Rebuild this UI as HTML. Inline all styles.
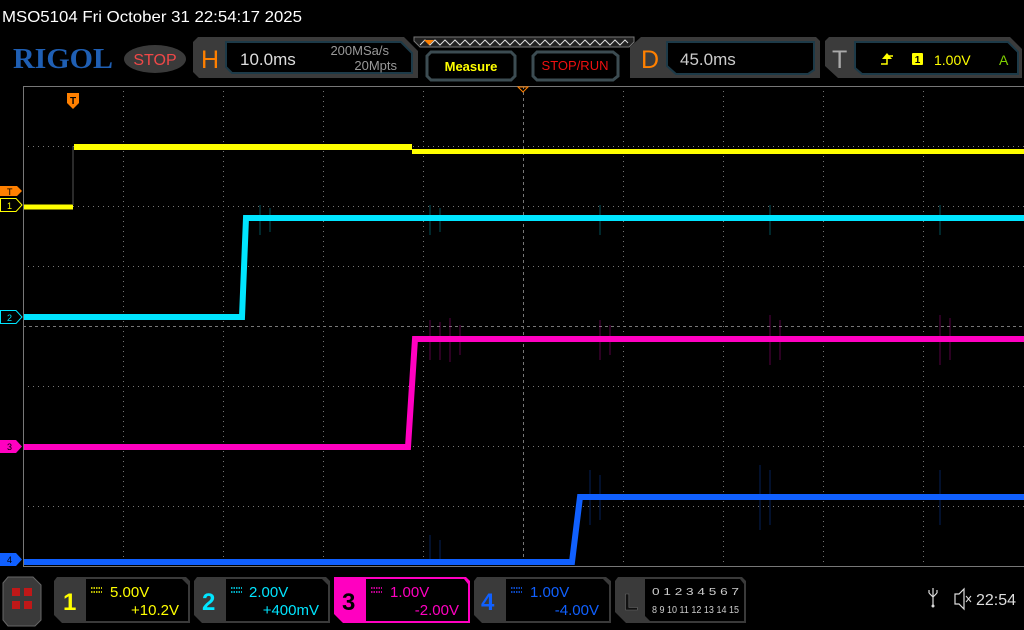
<!DOCTYPE html>
<html><head><meta charset="utf-8"><style>
body{margin:0;width:1024px;height:630px;background:#000;overflow:hidden;font-family:"Liberation Sans",sans-serif}
</style></head><body>
<svg width="1024" height="630" style="position:absolute;left:0;top:0" font-family="Liberation Sans, sans-serif">
<text x="2" y="22" fill="#fff" font-size="16" textLength="300" lengthAdjust="spacingAndGlyphs">MSO5104  Fri October 31 22:54:17 2025</text>
<text x="13" y="68" fill="#1f5fb4" font-size="29" font-family="Liberation Serif, serif" font-weight="bold" textLength="100" lengthAdjust="spacingAndGlyphs">RIGOL</text>
<ellipse cx="155" cy="59" rx="31" ry="14" fill="#3a3a3a"/>
<text x="155" y="65" fill="#f04848" font-size="16" text-anchor="middle">STOP</text>
<path d="M193 42 L198 37 L404 37 L418 51 L418 78 L199 78 L193 72Z" fill="#3b3b3b"/>
<path d="M226 42 L401 42 L412 53 L412 73 L232 73 L226 67Z" fill="#000" stroke="#1d3a48" stroke-width="2"/>
<text x="201" y="68" fill="#ff8000" font-size="25">H</text>
<text x="240" y="65" fill="#ddd" font-size="17">10.0ms</text>
<text x="389" y="55" fill="#999" font-size="13" text-anchor="end">200MSa/s</text>
<text x="397" y="70" fill="#999" font-size="13" text-anchor="end">20Mpts</text>
<path d="M414 37 L634 37 L634 42 L629 47 L420 47 L414 41Z" fill="#222" stroke="#777"/>
<polyline points="420,45 425,40 430,45 435,40 440,45 445,40 450,45 455,40 460,45 465,40 470,45 475,40 480,45 485,40 490,45 495,40 500,45 505,40 510,45 515,40 520,45 525,40 530,45 535,40 540,45 545,40 550,45 555,40 560,45 565,40 570,45 575,40 580,45 585,40 590,45 595,40 600,45 605,40 610,45 615,40 620,45 625,40 628,43" fill="none" stroke="#ddd" stroke-width="1"/>
<path d="M424 40 L434 40 L429 45Z" fill="#ff8000"/>
<path d="M427 56 L431 52 L511 52 L515 56 L515 76 L511 80 L431 80 L427 76Z" fill="#000" stroke="#3c4c52" stroke-width="3"/>
<text x="471" y="71" fill="#ffff00" font-size="13" font-weight="bold" text-anchor="middle">Measure</text>
<path d="M533 56 L537 52 L613 52 L618 56 L618 76 L613 80 L537 80 L533 76Z" fill="#000" stroke="#3c4c52" stroke-width="3"/>
<text x="575" y="70" fill="#f01010" font-size="13" text-anchor="middle">STOP/RUN</text>
<path d="M630 47 L641 37 L816 37 L820 41 L820 78 L630 78Z" fill="#3b3b3b"/>
<path d="M667 42 L814 42 L814 70 L808 74 L676 74 L667 66Z" fill="#000" stroke="#1d3a48" stroke-width="2"/>
<text x="641" y="68" fill="#ff8000" font-size="25">D</text>
<text x="680" y="65" fill="#ccc" font-size="17">45.0ms</text>
<path d="M825 41 L829 37 L1010 37 L1022 49 L1022 78 L838 78 L825 66Z" fill="#3b3b3b"/>
<path d="M855 42 L1008 42 L1018 52 L1018 74 L862 74 L855 68Z" fill="#000" stroke="#1d3a48" stroke-width="2"/>
<text x="832" y="68" fill="#aaa" font-size="25">T</text>
<path d="M881 64 L887 64 L887 56 L893 56" stroke="#ffff00" fill="none" stroke-width="1.5"/>
<path d="M882 59 L887 53 L892 59Z" fill="#ffff00"/>
<rect x="912" y="53" width="11" height="12" rx="1" fill="#ffff00"/>
<text x="917.5" y="63" fill="#000" font-size="10" font-weight="bold" text-anchor="middle">1</text>
<text x="934" y="65" fill="#ffff00" font-size="14">1.00V</text>
<text x="999" y="65" fill="#7fd000" font-size="14">A</text>

<g stroke="#777" stroke-width="1" stroke-dasharray="1,4">
<line x1="123.5" y1="86" x2="123.5" y2="566"/><line x1="223.5" y1="86" x2="223.5" y2="566"/><line x1="323.5" y1="86" x2="323.5" y2="566"/><line x1="423.5" y1="86" x2="423.5" y2="566"/><line x1="623.5" y1="86" x2="623.5" y2="566"/><line x1="723.5" y1="86" x2="723.5" y2="566"/><line x1="823.5" y1="86" x2="823.5" y2="566"/><line x1="923.5" y1="86" x2="923.5" y2="566"/>
<line x1="23" y1="146.5" x2="1024" y2="146.5"/><line x1="23" y1="206.5" x2="1024" y2="206.5"/><line x1="23" y1="266.5" x2="1024" y2="266.5"/><line x1="23" y1="386.5" x2="1024" y2="386.5"/><line x1="23" y1="446.5" x2="1024" y2="446.5"/><line x1="23" y1="506.5" x2="1024" y2="506.5"/>
</g>
<g stroke="#777" stroke-width="1" stroke-dasharray="3,3">
<line x1="523.5" y1="86" x2="523.5" y2="566"/><line x1="23" y1="326.5" x2="1024" y2="326.5"/>
</g>
<rect x="23.5" y="86.5" width="1010" height="480" fill="none" stroke="#777"/>
<path d="M518 87 L528 87 L523 92Z" fill="none" stroke="#ff8000"/>
<path d="M67 93 L79 93 L79 103 L73 109 L67 103Z" fill="#ff8000"/>
<text x="73" y="104" fill="#000" font-size="10" font-weight="bold" text-anchor="middle">T</text>
<path d="M0 186 L17 186 L22 191 L17 196 L0 196Z" fill="#ff8000"/>
<text x="7" y="195" fill="#000" font-size="9">T</text>
<path d="M0.5 198.5 L16 198.5 L22 205 L16 211.5 L0.5 211.5Z" fill="#000" stroke="#ffff00"/>
<text x="7" y="209" fill="#ffff00" font-size="9">1</text>
<path d="M0.5 310.5 L16 310.5 L22 317 L16 323.5 L0.5 323.5Z" fill="#000" stroke="#00e5ff"/>
<text x="7" y="321" fill="#00e5ff" font-size="9">2</text>
<path d="M0 440 L16 440 L22 446.5 L16 453 L0 453Z" fill="#ff00c0"/>
<text x="7" y="450" fill="#000" font-size="9">3</text>
<path d="M0 553 L16 553 L22 559.5 L16 566 L0 566Z" fill="#1060ff"/>
<text x="7" y="563" fill="#000" font-size="9">4</text>
<g fill="none">
<path d="M24 207 L73 207" stroke="#ffff00" stroke-width="5"/>
<path d="M73 146 L73 205" stroke="#555" stroke-width="1"/>
<path d="M74 147 L412 147" stroke="#ffff00" stroke-width="6"/>
<path d="M412 151.5 L1024 151.5" stroke="#ffff00" stroke-width="5"/>
<path d="M24 317 L242 317 L246 218 L1024 218" stroke="#00e5ff" stroke-width="6"/>
<path d="M24 447 L408 447 L415 339 L1024 339" stroke="#ff00c0" stroke-width="6"/>
<path d="M24 562 L572 562 L580 497 L1024 497" stroke="#1060ff" stroke-width="6"/>
</g>
<g stroke-width="1" opacity="0.35">
<path d="M430 320 V360 M440 322 V360 M450 318 V362 M460 325 V355 M600 320 V360 M610 325 V355 M770 315 V365 M780 320 V360 M940 315 V365 M950 318 V360" stroke="#ff00c0"/>
<path d="M260 205 V235 M270 208 V232 M430 205 V235 M440 208 V232 M600 205 V235 M770 205 V235 M940 205 V235" stroke="#00e5ff"/>
<path d="M590 470 V525 M600 475 V520 M760 465 V530 M770 470 V525 M940 470 V525 M430 535 V565 M440 540 V565" stroke="#1060ff"/>
</g>

<path d="M3 583 L8 577 L33 577 L41 585 L41 620 L35 626 L8 626 L3 620Z" fill="#3a3a3a" stroke="#666"/>
<rect x="12" y="588" width="8" height="8" fill="#c01818"/><rect x="24" y="588" width="8" height="8" fill="#c01818"/>
<rect x="12" y="601" width="8" height="8" fill="#c01818"/><rect x="24" y="601" width="8" height="8" fill="#c01818"/>

<path d="M54 581 L57 577 L186 577 L190 581 L190 623 L62 623 L54 615Z" fill="#3a3a3a"/>
<path d="M86 579 L182 579 L188 585 L188 621 L86 621Z" fill="#000"/>
<text x="63" y="610" fill="#ffff00" font-size="24" font-weight="bold">1</text>
<path d="M91 588 H102 M91 592 H102" stroke="#ffff00" stroke-dasharray="1.5,1" stroke-width="1.5"/>
<text x="110" y="597" fill="#ffff00" font-size="15">5.00V</text>
<text x="179" y="615" fill="#ffff00" font-size="15" text-anchor="end">+10.2V</text>

<path d="M194 581 L197 577 L326 577 L330 581 L330 623 L202 623 L194 615Z" fill="#3a3a3a"/>
<path d="M226 579 L322 579 L328 585 L328 621 L226 621Z" fill="#000"/>
<text x="202" y="610" fill="#00e5ff" font-size="24" font-weight="bold">2</text>
<path d="M231 588 H242 M231 592 H242" stroke="#00e5ff" stroke-dasharray="1.5,1" stroke-width="1.5"/>
<text x="249" y="597" fill="#00e5ff" font-size="15">2.00V</text>
<text x="319" y="615" fill="#00e5ff" font-size="15" text-anchor="end">+400mV</text>

<path d="M334 577 L466 577 L470 581 L470 623 L343 623 L334 614Z" fill="#ff00c0"/>
<path d="M366 579 L464 579 L468 584 L468 621 L366 621Z" fill="#000"/>
<text x="342" y="610" fill="#000" font-size="24" font-weight="bold">3</text>
<path d="M371 588 H382 M371 592 H382" stroke="#ff00c0" stroke-dasharray="1.5,1" stroke-width="1.5"/>
<text x="390" y="597" fill="#ff00c0" font-size="15">1.00V</text>
<text x="459" y="615" fill="#ff00c0" font-size="15" text-anchor="end">-2.00V</text>

<path d="M474 581 L477 577 L606 577 L611 581 L611 623 L482 623 L474 615Z" fill="#3a3a3a"/>
<path d="M506 579 L603 579 L609 585 L609 621 L506 621Z" fill="#000"/>
<text x="481" y="610" fill="#1060ff" font-size="24" font-weight="bold">4</text>
<path d="M511 588 H522 M511 592 H522" stroke="#1060ff" stroke-dasharray="1.5,1" stroke-width="1.5"/>
<text x="530" y="597" fill="#1060ff" font-size="15">1.00V</text>
<text x="599" y="615" fill="#1060ff" font-size="15" text-anchor="end">-4.00V</text>

<path d="M615 581 L618 577 L742 577 L746 581 L746 623 L626 623 L615 612Z" fill="#3a3a3a"/>
<path d="M645 579 L740 579 L744 584 L744 621 L650 621 L645 616Z" fill="#000"/>
<text x="624" y="610" fill="#111" stroke="#666" stroke-width="0.6" font-size="23" font-weight="bold">L</text>
<text x="652" y="595" fill="#ccc" font-size="10" textLength="87" lengthAdjust="spacingAndGlyphs">0 1 2 3   4 5 6 7</text>
<text x="652" y="613" fill="#ccc" font-size="10" textLength="87" lengthAdjust="spacingAndGlyphs">8 9 10 11 12 13 14 15</text>

<path d="M933 588 V606 M929 593 L933 597 L937 593 M929 593 V590 M937 593 V590" stroke="#ddd" fill="none" stroke-width="1.2"/>
<circle cx="933" cy="606" r="1.5" fill="#ddd"/>
<path d="M955 594 L959 594 L964 589 L964 609 L959 604 L955 604Z" fill="none" stroke="#ddd" stroke-width="1.2"/>
<path d="M966 596 L971 602 M971 596 L966 602" stroke="#ddd"/>
<text x="976" y="605" fill="#ddd" font-size="16">22:54</text>
</svg>
</body></html>
